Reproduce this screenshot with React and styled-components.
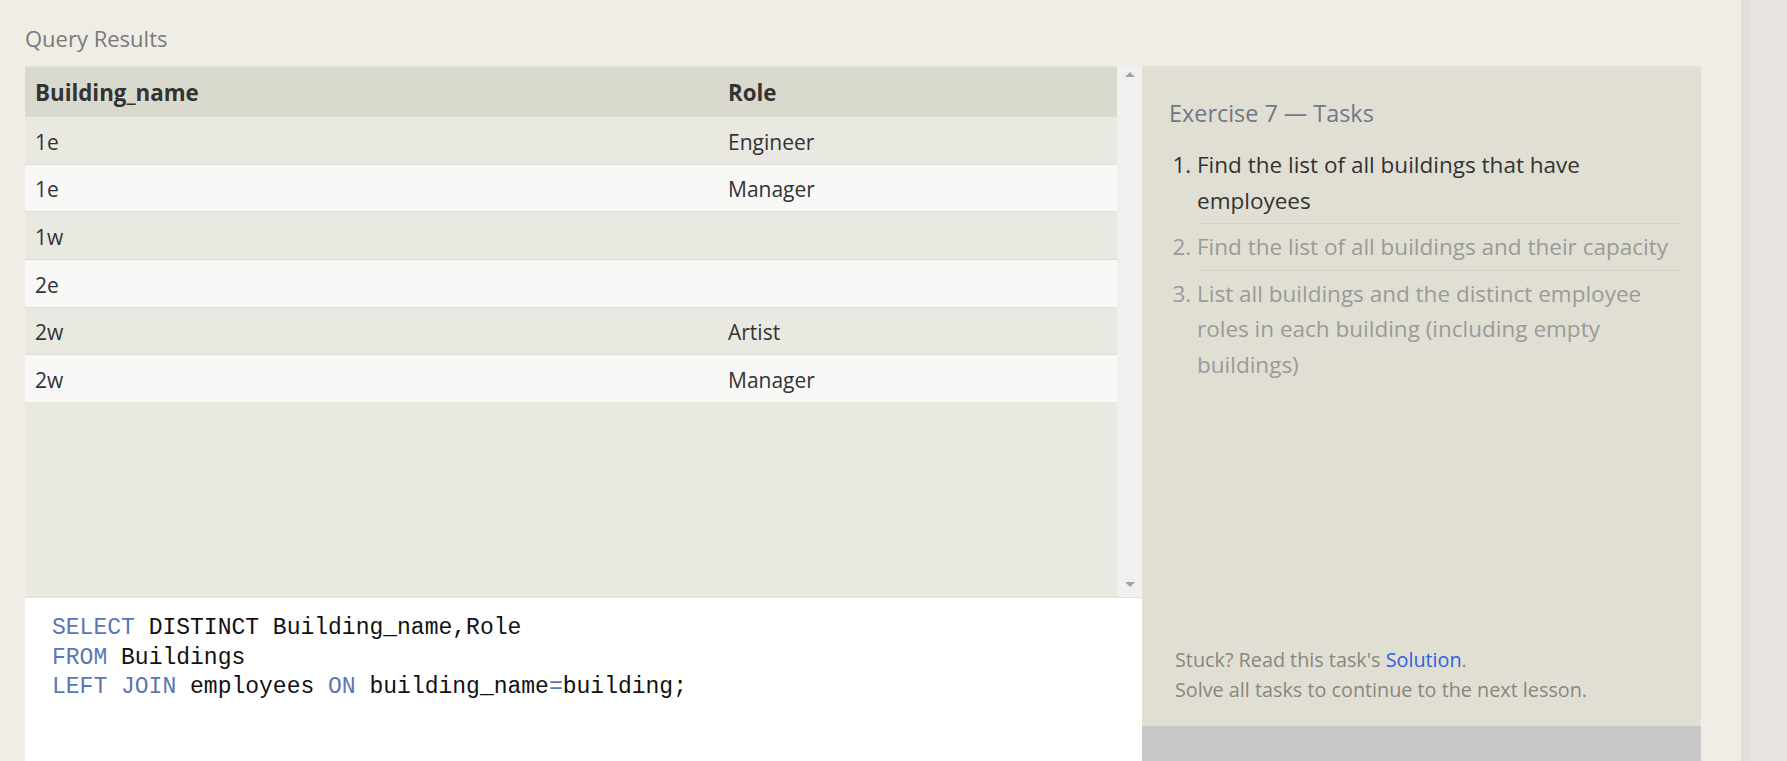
import React from 'react';
import styled, { createGlobalStyle } from 'styled-components';

const GlobalStyle = createGlobalStyle`
  html, body {
    margin: 0;
    padding: 0;
    background: #efede6;
    font-family: "Open Sans", "Liberation Sans", sans-serif;
    overflow: hidden;
  }
  * { box-sizing: border-box; }
`

const Page = styled.div`
  display: flex;
  height: 761px;
  width: 1787px;
`

const Main = styled.div`
  flex: 1;
  display: flex;
  flex-direction: column;
  padding-left: 25px;
`

const Stripe = styled.div`
  width: 46px;
  background: linear-gradient(to right, #e1dedb 0, #e1dedb 10px, #e7e3e0 10px);
`

const Title = styled.div`
  height: 66px;
  padding-top: 23px;
  font-size: 22px;
  line-height: 30px;
  color: #7a7a7a;
`

const Workspace = styled.div`
  flex: 1;
  display: flex;
  min-height: 0;
`

const LeftColumn = styled.div`
  width: 1117px;
  display: flex;
  flex-direction: column;
`

const Results = styled.div`
  height: 532px;
  display: flex;
  border-bottom: 1px solid #e2e2de;
`

const TableArea = styled.div`
  flex: 1;
  background: #eae9e1;
`

const Row = styled.div`
  display: grid;
  grid-template-columns: 693px 1fr;
  align-items: center;
  height: ${p => (p.$head ? '50px' : '47.67px')};
  padding: ${p => (p.$head ? '1px 0 0 10px' : '3px 0 0 10px')};
  font-size: ${p => (p.$head ? '22.3px' : '21px')};
  font-weight: ${p => (p.$head ? 700 : 400)};
  color: #333;
  background: ${p => (p.$head ? '#dad9cd' : p.$even ? '#f8f8f7' : '#eae9e1')};
  border-top: ${p => (p.$head ? '1px solid #e3e2d9' : '1px solid #dcdcd8')};
`

const Scrollbar = styled.div`
  width: 25px;
  background: #f0f0f0;
  display: flex;
  flex-direction: column;
  justify-content: space-between;
  align-items: center;
  padding: 6px 0 10px;
`

const Arrow = styled.div`
  width: 0;
  height: 0;
  border-left: 5px solid transparent;
  border-right: 5px solid transparent;
  ${p => (p.$down ? 'border-top: 5px solid #a3a3a3;' : 'border-bottom: 5px solid #a3a3a3;')}
`

const Editor = styled.pre`
  flex: 1;
  margin: 0;
  background: #ffffff;
  padding: 16px 0 0 27px;
  font-family: "Liberation Mono", "DejaVu Sans Mono", monospace;
  font-size: 23px;
  line-height: 29.6px;
  color: #111;
`

const Kw = styled.span`
  color: #5a77b3;
`

const Panel = styled.div`
  width: 559px;
  display: flex;
  flex-direction: column;
  background: #e1dfd4;
  border-top: 3px solid #e4e3d9;
`

const PanelBody = styled.div`
  flex: 1;
  padding: 29px 17px 0 27px;
  display: flex;
  flex-direction: column;
`

const PanelTitle = styled.div`
  font-size: 23.4px;
  line-height: 30px;
  color: #6f7986;
`

const TaskList = styled.ol`
  margin: 14px 0 0;
  padding-left: 28px;
  font-size: 22.5px;
  line-height: 35.5px;
`

const Task = styled.li`
  padding: 5px 0;
  color: ${p => (p.$active ? '#333' : '#9a9a9a')};
  border-bottom: ${p => (p.$last ? 'none' : '1px solid #d7d5ca')};
`

const Footer = styled.div`
  margin-top: auto;
  padding: 0 0 21px 6px;
  font-size: 19.8px;
  line-height: 30px;
  color: #8a8580;
`

const Link = styled.a`
  color: #2a62e0;
  text-decoration: none;
`

const PanelBottom = styled.div`
  height: 35px;
  background: #c8c8c8;
`

const rows = [
  ['1e', 'Engineer'],
  ['1e', 'Manager'],
  ['1w', ''],
  ['2e', ''],
  ['2w', 'Artist'],
  ['2w', 'Manager'],
];

export default function App() {
  return (
    <Page>
      <GlobalStyle />
      <Main>
        <Title>Query Results</Title>
        <Workspace>
          <LeftColumn>
            <Results>
              <TableArea>
                <Row $head>
                  <span>Building_name</span>
                  <span>Role</span>
                </Row>
                {rows.map((r, i) => (
                  <Row key={i} $even={i % 2 === 1}>
                    <span>{r[0]}</span>
                    <span>{r[1]}</span>
                  </Row>
                ))}
              </TableArea>
              <Scrollbar>
                <Arrow />
                <Arrow $down />
              </Scrollbar>
            </Results>
            <Editor>
              <Kw>SELECT</Kw> DISTINCT Building_name,Role{'\n'}
              <Kw>FROM</Kw> Buildings{'\n'}
              <Kw>LEFT JOIN</Kw> employees <Kw>ON</Kw> building_name<Kw>=</Kw>building;
            </Editor>
          </LeftColumn>
          <Panel>
            <PanelBody>
              <PanelTitle>Exercise 7 — Tasks</PanelTitle>
              <TaskList>
                <Task $active>Find the list of all buildings that have employees</Task>
                <Task>Find the list of all buildings and their capacity</Task>
                <Task $last>List all buildings and the distinct employee roles in each building (including empty buildings)</Task>
              </TaskList>
              <Footer>
                Stuck? Read this task's <Link href="#">Solution</Link>.<br />
                Solve all tasks to continue to the next lesson.
              </Footer>
            </PanelBody>
            <PanelBottom />
          </Panel>
        </Workspace>
      </Main>
      <Stripe />
    </Page>
  );
}
